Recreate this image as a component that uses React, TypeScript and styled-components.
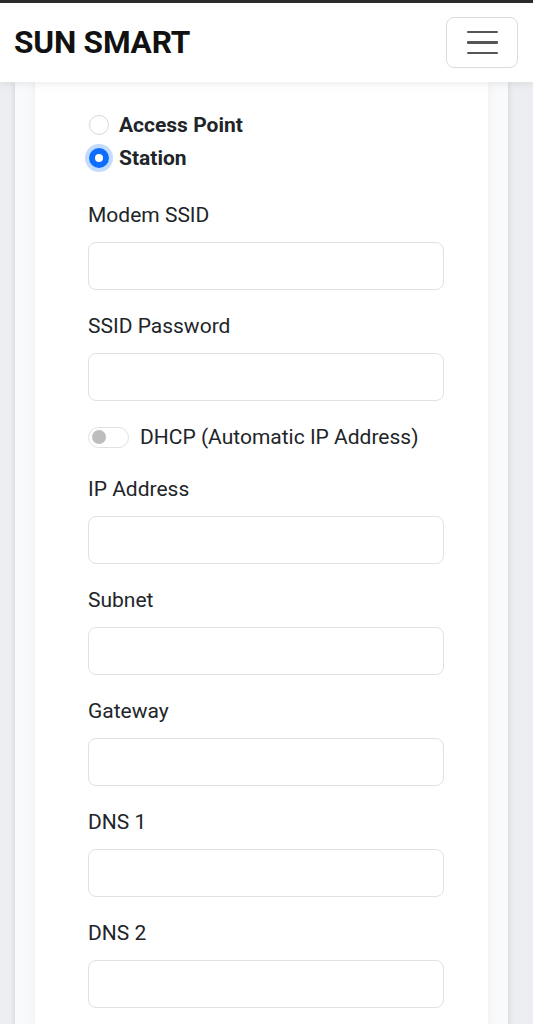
import React from "react";
import styled, { createGlobalStyle } from "styled-components";

const Global = createGlobalStyle`
  html, body { margin: 0; padding: 0; }
  body {
    background: #eceef1;
    font-family: Roboto, "Noto Sans", Arial, sans-serif;
    color: #212529;
    overflow: hidden;
  }
  * { box-sizing: border-box; }
`;

const Page = styled.div`
  min-height: 1024px;
  display: flex;
  flex-direction: column;
`;

const Navbar = styled.nav`
  position: relative;
  z-index: 2;
  height: 82px;
  border-top: 3px solid #2b2b2b;
  background: #fff;
  box-shadow: 0 2px 8px rgba(0, 0, 0, 0.08);
  display: flex;
  align-items: center;
  justify-content: space-between;
  padding: 0 15px 0 14px;
`;

const Brand = styled.div`
  font-size: 31.6px;
  font-weight: 700;
  color: #111;
  letter-spacing: -0.2px;
`;

const Toggler = styled.button`
  width: 72px;
  height: 51px;
  border: 1px solid #dcdcdc;
  border-radius: 8px;
  background: #fff;
  display: flex;
  flex-direction: column;
  align-items: center;
  justify-content: center;
  gap: 8px;
  padding: 0;
`;

const Bar = styled.span`
  display: block;
  width: 31px;
  height: 2.5px;
  background: #555;
  border-radius: 1px;
`;

const Wrapper = styled.main`
  flex: 1;
  margin: 0 25px 0 15px;
  background: #f9fafb;
  box-shadow: 0 0 6px rgba(0, 0, 0, 0.14);
  display: flex;
  flex-direction: column;
  padding: 0 20px;
`;

const Card = styled.section`
  flex: 1;
  background: #fff;
  box-shadow: 0 0 10px rgba(0, 0, 0, 0.06);
  padding: 28px 44px 0 53px;
`;

const RadioGroup = styled.div`
  display: flex;
  flex-direction: column;
  gap: 3px;
  margin-bottom: 27px;
`;

const RadioRow = styled.label`
  display: flex;
  align-items: center;
  gap: 10px;
  height: 30px;
  font-size: 21px;
  font-weight: 700;
  color: #212529;
`;

const RadioDot = styled.span<{ $checked?: boolean }>`
  width: 20px;
  height: 20px;
  margin-left: 1px;
  border-radius: 50%;
  border: ${(p) => (p.$checked ? "6px solid #0d6efd" : "1px solid #d6d8db")};
  background: #fff;
  box-shadow: ${(p) => (p.$checked ? "0 0 0 4px rgba(13, 110, 253, 0.25)" : "none")};
`;

const Field = styled.div`
  display: flex;
  flex-direction: column;
  margin-bottom: 21px;
`;

const Label = styled.label`
  font-size: 21px;
  line-height: 30px;
  margin-bottom: 12px;
  color: #212529;
`;

const Input = styled.input`
  height: 48px;
  width: 100%;
  border: 1px solid #dee2e6;
  border-radius: 8px;
  background: #fff;
  font-size: 20px;
  padding: 0 14px;
  outline: none;
`;

const SwitchRow = styled.label`
  display: flex;
  align-items: center;
  gap: 11px;
  height: 30px;
  margin-top: 1px;
  font-size: 21px;
  color: #212529;
  margin-bottom: 22px;
`;

const Switch = styled.span`
  width: 41px;
  height: 21px;
  border-radius: 11px;
  border: 1px solid #dee2e6;
  background: #fff;
  display: flex;
  align-items: center;
  padding-left: 3px;
`;

const Knob = styled.span`
  width: 14px;
  height: 14px;
  border-radius: 50%;
  background: #bdbdbd;
`;

const fields1 = ["Modem SSID", "SSID Password"];
const fields2 = ["IP Address", "Subnet", "Gateway", "DNS 1", "DNS 2"];

export default function App() {
  return (
    <Page>
      <Global />
      <Navbar>
        <Brand>SUN SMART</Brand>
        <Toggler aria-label="menu">
          <Bar />
          <Bar />
          <Bar />
        </Toggler>
      </Navbar>
      <Wrapper>
        <Card>
          <RadioGroup>
            <RadioRow>
              <RadioDot />
              Access Point
            </RadioRow>
            <RadioRow>
              <RadioDot $checked />
              Station
            </RadioRow>
          </RadioGroup>
          {fields1.map((f) => (
            <Field key={f}>
              <Label>{f}</Label>
              <Input />
            </Field>
          ))}
          <SwitchRow>
            <Switch>
              <Knob />
            </Switch>
            DHCP (Automatic IP Address)
          </SwitchRow>
          {fields2.map((f) => (
            <Field key={f}>
              <Label>{f}</Label>
              <Input />
            </Field>
          ))}
        </Card>
      </Wrapper>
    </Page>
  );
}
